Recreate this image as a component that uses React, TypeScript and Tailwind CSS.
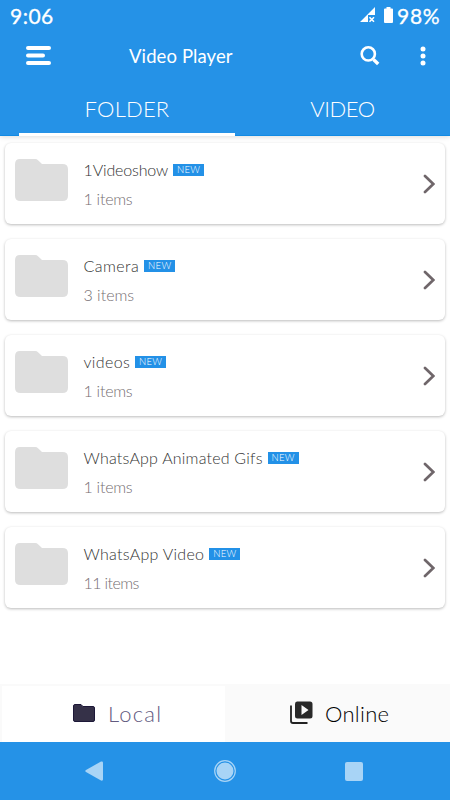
import React from "react";

type Folder = { name: string; items: string; spacing: string; itemSpacing: string };

const folders: Folder[] = [
  { name: "1Videoshow", items: "1 items", spacing: "tracking-[-0.15px]", itemSpacing: "tracking-[-0.25px]" },
  { name: "Camera", items: "3 items", spacing: "tracking-[0.45px]", itemSpacing: "tracking-normal" },
  { name: "videos", items: "1 items", spacing: "tracking-[0.35px]", itemSpacing: "tracking-[-0.25px]" },
  { name: "WhatsApp Animated Gifs", items: "1 items", spacing: "tracking-[0.21px]", itemSpacing: "tracking-[-0.25px]" },
  { name: "WhatsApp Video", items: "11 items", spacing: "tracking-[0.28px]", itemSpacing: "tracking-[-0.6px]" },
];

function StatusBar() {
  return (
    <div className="flex h-8 items-center pl-[10px] pr-[9px] text-[21px] leading-8 font-normal [-webkit-text-stroke:0.3px_white]">
      <span className="grow pb-px tracking-[0.5px]">9:06</span>
      <svg className="mr-[8px] mb-[2px] h-4 w-4" viewBox="0 0 16 16" fill="#fff">
        <path d="M0 15 15 0v8H8v7z" />
        <path d="m9.500 10.200 4.500 4.500m0-4.500-4.500 4.500" stroke="#fff" strokeWidth="1.600" />
      </svg>
      <svg className="mr-[4.500px] mb-[2px] h-4 w-[9px]" viewBox="0 0 9 16" fill="#fff">
        <path d="M2.500 0h4v1.500H8q1 0 1 1V15q0 1-1 1H1q-1 0-1-1V2.500q0-1 1-1h1.500z" />
      </svg>
      <span className="w-[44px] whitespace-nowrap pb-px tracking-[0.7px]">98%</span>
    </div>
  );
}

function AppBar() {
  return (
    <div className="flex h-12 items-center pl-[26px] pr-[24px]">
      <svg className="mb-px h-[19px] w-[25px]" viewBox="0 0 25 19" stroke="#fff" strokeWidth="4" strokeLinecap="round">
        <path d="M2 2h21M2 9.500h15M2 17h21" />
      </svg>
      <h1 className="ml-[78px] grow pb-px text-[18.500px] leading-6 font-normal tracking-[0.1px]">Video Player</h1>
      <svg className="mr-[40px] h-[20px] w-[20px]" viewBox="0 0 20 20" fill="none" stroke="#fff">
        <circle cx="8.300" cy="7.900" r="6.600" strokeWidth="2.600" />
        <path d="m13.500 13.500 4.700 4.500" strokeWidth="3.400" />
      </svg>
      <svg className="mb-px h-[20px] w-[6px]" viewBox="0 0 6 20" fill="#fff">
        <circle cx="3" cy="3" r="2.500" />
        <circle cx="3" cy="10" r="2.500" />
        <circle cx="3" cy="17" r="2.500" />
      </svg>
    </div>
  );
}

function Tabs() {
  return (
    <div className="flex h-14 border-b border-[#118ae4] pl-[19px] text-[22px] font-light">
      <div className="relative flex w-[216px] items-center justify-center pt-[2px] tracking-[0.2px]">
        FOLDER
        <span className="absolute -bottom-px left-0 h-[3px] w-full bg-white" />
      </div>
      <div className="flex w-[215px] items-center justify-center pt-[2px] tracking-[-0.4px]">VIDEO</div>
    </div>
  );
}

function FolderCard({ folder }: { folder: Folder }) {
  return (
    <li className="flex h-[81px] rounded-[6px] bg-white pl-[10px] pr-[10px] shadow-[0_1px_3px_rgba(0,0,0,0.27)]">
      <svg className="mt-[16px] h-[42px] w-[53px] shrink-0" viewBox="0 0 53 43" preserveAspectRatio="none" fill="#dedede">
        <path d="M5 0h15q2 0 3.300 1.500L27 5.200h20.500Q53 5.200 53 10.500V37.500Q53 43 47.500 43H5.500Q0 43 0 37.500V5.500Q0 0 5 0Z" />
      </svg>
      <div className="ml-[15.500px] grow pt-[16px] font-light">
        <div className="flex items-center">
          <span className={"text-[16px] leading-[22px] text-[#333] " + folder.spacing}>{folder.name}</span>
          <span className="ml-[5px] flex h-[12px] w-[31px] items-center justify-center bg-[#2391e7] text-[9.500px] leading-none tracking-[0.3px] text-white">NEW</span>
        </div>
        <div className={"mt-[7px] text-[16px] leading-[22px] text-[#756e72] " + folder.itemSpacing}>{folder.items}</div>
      </div>
      <svg className="mt-[31px] h-[20px] w-[12px] shrink-0" viewBox="0 0 12 20" fill="none" stroke="#6f666a" strokeWidth="2.700" strokeLinecap="round">
        <path d="m2 2 8.300 8L2 18" />
      </svg>
    </li>
  );
}

export default function App() {
  return (
    <div className="flex h-[800px] w-[450px] flex-col overflow-hidden bg-white font-[Lato,sans-serif]">
      <header className="bg-[#2592e7] text-white shadow-[0_1px_5px_rgba(0,0,0,0.14)]">
        <StatusBar />
        <AppBar />
        <Tabs />
      </header>
      <ul className="flex grow flex-col gap-[15px] px-[5px] pt-[7px]">
        {folders.map((folder) => (
          <FolderCard key={folder.name} folder={folder} />
        ))}
      </ul>
      <div className="flex h-[58px] shrink-0 bg-[#fafafa] text-[22px] font-light">
        <div className="mt-[2px] ml-[2px] flex w-[223px] items-center bg-white pl-[71px] text-[#625a80]">
          <svg className="mr-[13px] mb-[2px] h-[18px] w-[22px]" viewBox="0 0 22 18" fill="#353148" stroke="#1d1838" strokeWidth="1">
            <path d="M2 .5h6l2 2h10q1.500 0 1.500 1.500v12q0 1.500-1.500 1.500H2Q.5 17.500.5 16V2Q.5.500 2 .5Z" />
          </svg>
          <span className="pb-[2px] tracking-[1.200px]">Local</span>
        </div>
        <div className="flex grow items-center pl-[65px] text-black">
          <svg className="mr-[12px] mb-px h-[23px] w-[23px]" viewBox="0 0 23 23">
            <path d="M1 4.500V20q0 2 2 2h14.500" fill="none" stroke="#222" strokeWidth="1.800" />
            <path fillRule="evenodd" fill="#292929" d="M7 .5h13q2.500 0 2.500 2.500v12q0 2.500-2.500 2.500H7.500Q5 17.500 5 15V3Q5 .5 7 .5Zm4.500 3.500v10l7-5z" />
          </svg>
          <span className="tracking-[0.3px]">Online</span>
        </div>
      </div>
      <nav className="flex h-[58px] shrink-0 items-center bg-[#2592e7] pl-[85px]">
        <svg className="h-[20px] w-[18px]" viewBox="0 0 18 20" fill="#a8d4f6">
          <path d="M1 9 16 .5q2-.5 2 1v17q0 1.500-2 1L1 11q-1.500-1 0-2Z" />
        </svg>
        <svg className="ml-[111px] h-[22px] w-[22px]" viewBox="0 0 22 22" fill="#a8d4f6">
          <circle cx="11" cy="11" r="8.500" />
          <circle cx="11" cy="11" r="10.300" fill="none" stroke="#a8d4f6" strokeWidth="1.200" />
        </svg>
        <span className="ml-[109px] h-[19px] w-[18px] rounded-[2px] bg-[#a8d4f6]" />
      </nav>
    </div>
  );
}
